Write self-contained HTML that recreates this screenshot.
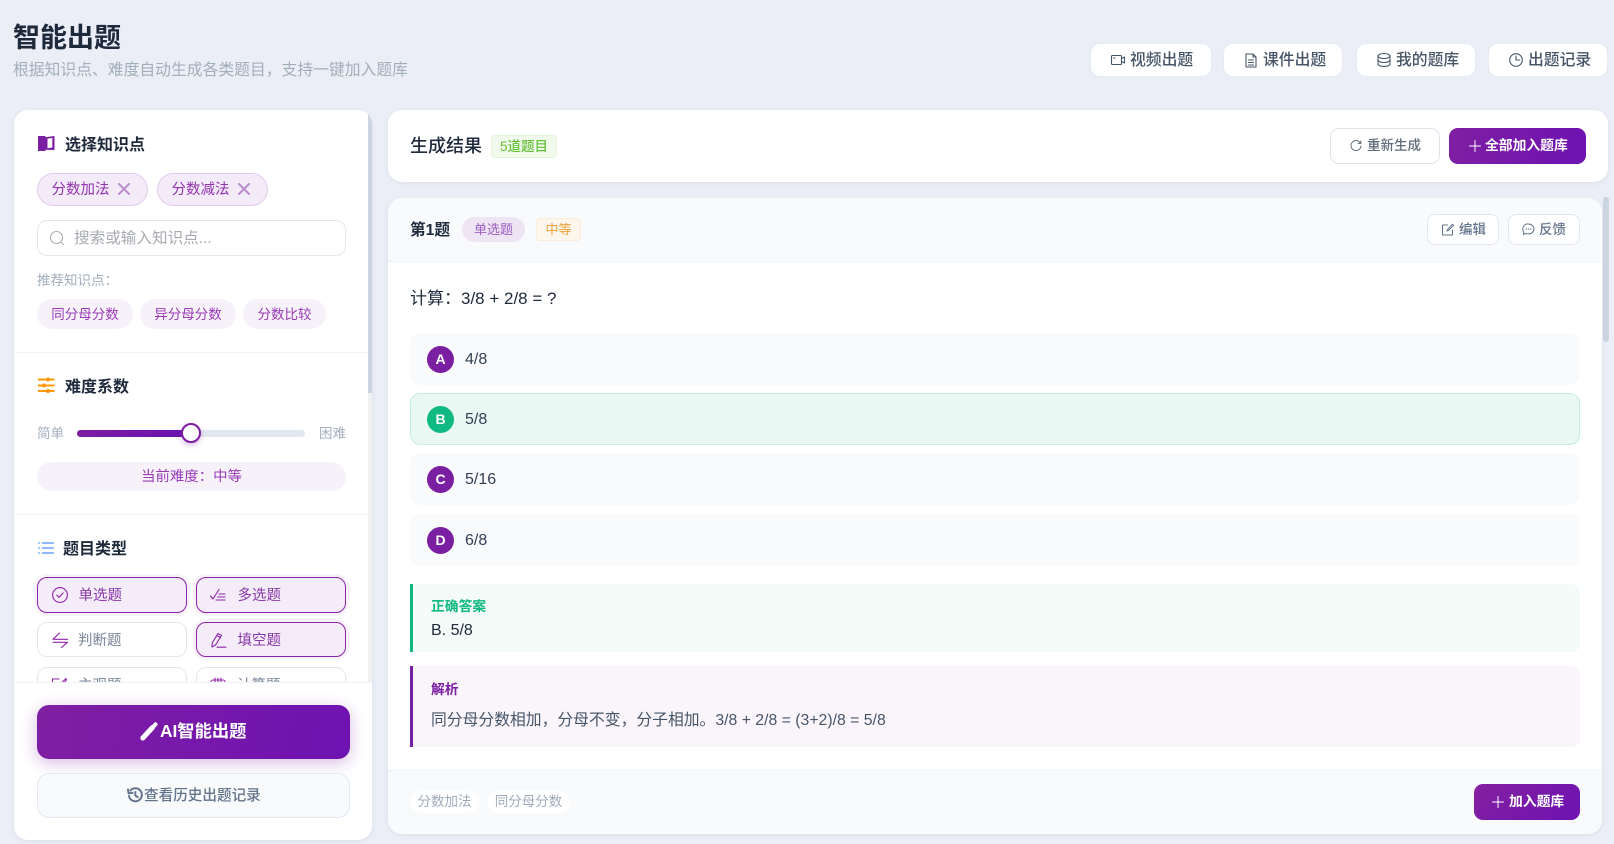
<!DOCTYPE html>
<html lang="zh"><head><meta charset="utf-8"><title>智能出题</title>
<style>
*{box-sizing:border-box;margin:0;padding:0}
html,body{width:1614px;height:844px;overflow:hidden;background:#ebeef6;font-family:"Liberation Sans","Noto Sans CJK SC",sans-serif}
.a{position:absolute}
.t{position:absolute;white-space:nowrap}
svg{position:absolute;fill:none;stroke:currentColor;stroke-linecap:round;stroke-linejoin:round}
.card{position:absolute;background:#fff;border-radius:14px;box-shadow:0 1px 4px rgba(100,116,139,.12)}
.topb{position:absolute;top:43px;height:34px;background:#fff;border:1px solid #e6eaf2;border-radius:10px;color:#475569;font-size:15.8px;font-weight:500;line-height:34px}
.h3{position:absolute;font-size:16px;font-weight:600;color:#1e293b;line-height:24px;white-space:nowrap}
.tag{position:absolute;top:173px;height:33px;border:1px solid #e3c9ec;background:#f3ebf8;border-radius:17px;color:#9333b0;font-size:14.5px;line-height:33px;padding-left:13.500px}
.rec{position:absolute;top:299px;height:30px;background:#f7f2fa;border-radius:15px;color:#9a3cb8;font-size:13.5px;line-height:31px;text-align:center}
.ty{position:absolute;width:150px;height:36px;border-radius:10px;border:1px solid #e2e8f0;background:#fff;color:#7a8698;font-size:14.5px;line-height:37px;padding-left:40px}
.ty.on{border:1.5px solid #8e24aa;background:#f4ecf9;color:#8a3aa8;box-shadow:0 0 0 3px rgba(142,36,170,.06);line-height:36px;padding-left:40.5px}
.ty svg{color:#8e24aa}
.opt{position:absolute;left:410px;width:1170px;height:52px;background:#f8fafc;border-radius:10px;font-size:16px;color:#334155;line-height:53px;padding-left:55px}
.opt b{position:absolute;left:17px;top:12.5px;width:27px;height:27px;border-radius:50%;background:#7b1fa2;color:#fff;font-size:14px;line-height:27px;text-align:center}
.sm{position:absolute;top:214px;width:72px;height:31px;background:#fff;border:1px solid #e2e8f0;border-radius:8px;color:#64748b;font-size:13.5px;font-weight:500;line-height:29px}
</style></head><body>

<div class="t" style="left:13px;top:18px;font-size:27px;font-weight:600;color:#1e293b;line-height:40px">智能出题</div>
<div class="t" style="left:13px;top:59px;font-size:15.8px;color:#a3aebd;line-height:24px">根据知识点、难度自动生成各类题目&#65292;支持一键加入题库</div>

<div class="topb" style="left:1090px;width:122px"><svg style="left:19px;top:8px" width="16" height="16" viewBox="0 0 16 16" stroke-width="1.1"><rect x="1.5" y="3.5" width="10" height="9" rx="1"/><path d="M11.5 6.5l3-1.5v6l-3-1.5M3.5 6h1.5"/></svg><span class="t" style="left:39px">视频出题</span></div>
<div class="topb" style="left:1223px;width:120px"><svg style="left:19px;top:8px" width="16" height="16" viewBox="0 0 16 16" stroke-width="1.1"><path d="M3 2h7l3 3v10H3zM10 2v3h3M5.5 8h5M5.5 10.5h5M5.5 13h5"/></svg><span class="t" style="left:39px">课件出题</span></div>
<div class="topb" style="left:1356px;width:120px"><svg style="left:19px;top:8px" width="16" height="16" viewBox="0 0 16 16" stroke-width="1.1"><ellipse cx="8" cy="4" rx="6" ry="2.5"/><path d="M2 4v8c0 1.4 2.7 2.5 6 2.5s6-1.1 6-2.5V4M2 8c0 1.4 2.7 2.5 6 2.5s6-1.1 6-2.5"/></svg><span class="t" style="left:39px">我的题库</span></div>
<div class="topb" style="left:1488px;width:120px"><svg style="left:19px;top:8px" width="16" height="16" viewBox="0 0 16 16" stroke-width="1.1"><circle cx="8" cy="8" r="6.3"/><path d="M8 4v4h3.5"/></svg><span class="t" style="left:39px">出题记录</span></div>

<!-- left panel -->
<div class="card" style="left:14px;top:110px;width:358px;height:730px;overflow:hidden">
  <div class="a" style="left:354px;top:0;width:4px;height:572px;background:#f1f1f1"></div>
  <div class="a" style="left:354px;top:0;width:4px;height:283px;background:#cbd5e1"></div>
  <div class="a" style="left:0;top:242px;width:354px;height:1px;background:#f1f5f9"></div>
  <div class="a" style="left:0;top:404px;width:354px;height:1px;background:#f1f5f9"></div>
</div>

<svg style="left:38px;top:135px;color:#7b1fa2" width="17" height="17" viewBox="0 0 17 17" stroke="none"><path fill="#7b1fa2" stroke="none" d="M0 1h7.5v1.2L16.5 1v14l-9-.3V16H0zM9.5 3.6v9.6l4.8-.7V3z" fill-rule="evenodd"/></svg>
<div class="h3" style="left:65px;top:134px">选择知识点</div>

<div class="tag" style="left:37px;width:111px">分数加法<svg style="left:80px;top:9px;color:#b98cce" width="12" height="12" viewBox="0 0 12 12" stroke-width="2"><path d="M1 1l10 10M11 1L1 11"/></svg></div>
<div class="tag" style="left:157px;width:111px">分数减法<svg style="left:80px;top:9px;color:#b98cce" width="12" height="12" viewBox="0 0 12 12" stroke-width="2"><path d="M1 1l10 10M11 1L1 11"/></svg></div>

<div class="a" style="left:37px;top:220px;width:309px;height:36px;border:1px solid #e2e8f0;border-radius:10px;background:#fff"></div>
<svg style="left:49px;top:230px;color:#a8abb2" width="16" height="16" viewBox="0 0 16 16" stroke-width="1.1"><circle cx="7.5" cy="7.5" r="6"/><path d="M12 12l2.5 2.5"/></svg>
<div class="t" style="left:74px;top:227px;font-size:15.6px;color:#a8abb2;line-height:24px">搜索或输入知识点...</div>

<div class="t" style="left:37px;top:272px;font-size:13.5px;color:#a3aebd;line-height:18px">推荐知识点&#65306;</div>
<div class="rec" style="left:37px;width:96px">同分母分数</div>
<div class="rec" style="left:140px;width:96px">异分母分数</div>
<div class="rec" style="left:243px;width:83px">分数比较</div>

<svg style="left:38px;top:377px;color:#ff9800" width="17" height="17" viewBox="0 0 17 17" stroke-width="2" stroke-linecap="butt"><path d="M0 2.5h16.5M0 8.500h16.500M0 14h16.500" stroke-linecap="butt"/><circle cx="10" cy="2.500" r="2" fill="#ff9800" stroke="none"/><circle cx="6" cy="8.500" r="2" fill="#ff9800" stroke="none"/><circle cx="10" cy="14" r="2" fill="#ff9800" stroke="none"/></svg>
<div class="h3" style="left:65px;top:376px">难度系数</div>

<div class="t" style="left:37px;top:425px;font-size:13.5px;color:#a3aebd;line-height:18px">简单</div>
<div class="a" style="left:77px;top:430px;width:228px;height:7px;background:#e2e8f0;border-radius:4px"></div>
<div class="a" style="left:77px;top:430px;width:114px;height:7px;background:linear-gradient(90deg,#7b1fa2,#6a11b0);border-radius:4px"></div>
<div class="a" style="left:181px;top:423px;width:20px;height:20px;border-radius:50%;background:#fff;border:2px solid #7b1fa2;box-shadow:0 2px 6px rgba(123,31,162,.3)"></div>
<div class="t" style="left:319px;top:425px;font-size:13.5px;color:#a3aebd;line-height:18px">困难</div>

<div class="a" style="left:37px;top:462px;width:309px;height:29px;border-radius:15px;background:#f7f2fa;color:#9a3cb8;font-size:14.4px;line-height:31px;text-align:center">当前难度&#65306;中等</div>

<svg style="left:38px;top:541px;color:#4f8ff7" width="16" height="14" viewBox="0 0 16 14" stroke-width="1.2"><path d="M4.500 2h11M4.500 7h11M4.500 12h11M.8 2h.8M.8 7h.8M.8 12h.8"/></svg>
<div class="h3" style="left:63px;top:538px">题目类型</div>

<div class="a" style="left:14px;top:560px;width:354px;height:122px;overflow:hidden">
  <div class="ty on" style="left:23px;top:17px">单选题<svg style="left:14px;top:8.500px" width="16" height="16" viewBox="0 0 16 16" stroke-width="1.100"><circle cx="8" cy="8" r="7.400"/><path d="M4.800 8.200l2.200 2.200 4.200-4.500"/></svg></div>
  <div class="ty on" style="left:182px;top:17px">多选题<svg style="left:13px;top:10px" width="17" height="14" viewBox="0 0 17 14" stroke-width="1.100"><path d="M.5 8l2.500 3L9 1.500M9 6h6M7.500 9h7.500M6 12h9"/></svg></div>
  <div class="ty" style="left:23px;top:62px;height:35px;line-height:36px">判断题<svg style="left:14px;top:9px" width="16" height="16" viewBox="0 0 16 16" stroke-width="1.100"><path d="M7.500 1L1 7.300h14.500M1 10.300h14.500L9.500 15.500"/></svg></div>
  <div class="ty on" style="left:182px;top:62px;height:35px;line-height:36px">填空题<svg style="left:14px;top:9px" width="16" height="16" viewBox="0 0 16 16" stroke-width="1.100"><path d="M1 15l.2-4L7 1.500l3.500 2L4.500 13zM6 3.500l3.500 2M6 15.200h9"/></svg></div>
  <div class="ty" style="left:23px;top:107px">主观题<svg style="left:13px;top:9px" width="16" height="16" viewBox="0 0 16 16" stroke-width="1.100"><path d="M8 2H1.500v12H13V9M15 1.500L7 9l-1 2.500 2.500-1L15.500 3z"/></svg></div>
  <div class="ty" style="left:182px;top:107px">计算题<svg style="left:13px;top:9px" width="16" height="16" viewBox="0 0 16 16" stroke-width="1.100"><path d="M3 3h10a2 2 0 012 2v8H1V5a2 2 0 012-2zM5 1v4M8 1v4M11 1v4"/></svg></div>
</div>

<div class="a" style="left:14px;top:682px;width:358px;height:158px;background:#fff;border-top:1px solid #eef2f7;border-radius:0 0 14px 14px"></div>
<div class="a" style="left:37px;top:705px;width:313px;height:54px;border-radius:12px;background:linear-gradient(100deg,#7f1fa2,#6e12b2);box-shadow:0 4px 16px rgba(123,31,162,.3)"></div>
<svg style="left:140px;top:722px" width="18" height="19" viewBox="0 0 18 19"><path d="M2.800 16L12.500 5.500" stroke="#fff" stroke-width="5" stroke-linecap="round"/><path d="M14.300 3.600l1.200-1.300" stroke="#fff" stroke-width="4" stroke-linecap="round"/></svg>
<div class="t" style="left:160px;top:718px;font-size:17.3px;font-weight:700;color:#fff;line-height:26px">AI智能出题</div>
<div class="a" style="left:37px;top:773px;width:313px;height:45px;border-radius:12px;background:#f8fafc;border:1px solid #e2e8f0"></div>
<svg style="left:127px;top:787px;color:#64748b" width="16" height="16" viewBox="0 0 16 16" stroke-width="2"><path d="M3.500 3.500A6.500 6.500 0 112 9M1 2.500l.6 3.900 3.900-.6M8.300 5v3.500l2.500 1.700"/></svg>
<div class="t" style="left:144px;top:785px;font-size:14.600px;font-weight:500;color:#64748b;line-height:22px">查看历史出题记录</div>

<!-- result header -->
<div class="card" style="left:388px;top:110px;width:1220px;height:72px"></div>
<div class="t" style="left:410px;top:132px;font-size:18px;font-weight:500;color:#1e293b;line-height:28px">生成结果</div>
<div class="a" style="left:491px;top:135px;width:66px;height:23px;background:#f0f9eb;border:1px solid #e1f3d8;border-radius:4px;color:#67c23a;font-size:13.500px;font-weight:500;line-height:21px;text-align:center">5道题目</div>

<div class="a" style="left:1330px;top:128px;width:110px;height:36px;border:1px solid #dfe3ec;border-radius:9px;background:#fff;color:#606b7a;font-size:13.500px;font-weight:500;line-height:34px"><svg style="left:19px;top:11px" width="12" height="12" viewBox="0 0 12 12" stroke-width="1"><path d="M10.500 3.300A5 5 0 1011 6M10.800 1v2.500H8.300"/></svg><span class="t" style="left:36px">重新生成</span></div>
<div class="a" style="left:1449px;top:128px;width:137px;height:36px;border-radius:9px;background:linear-gradient(100deg,#7f1fa2,#6e12b2);color:#fff;font-size:13.800px;font-weight:700;line-height:36px"><svg style="left:20px;top:12px" width="12" height="12" viewBox="0 0 12 12" stroke-width="1"><path d="M6 .5v11M.5 6h11"/></svg><span class="t" style="left:36px">全部加入题库</span></div>

<!-- question card -->
<div class="card" style="left:388px;top:198px;width:1214px;height:636px;overflow:hidden">
  <div class="a" style="left:0;top:0;width:100%;height:64px;background:#f8fafc;border-bottom:1px solid #eef2f7"></div>
  <div class="a" style="left:0;top:572px;width:100%;height:64px;background:#f8fafc;border-top:1px solid #eef2f7"></div>
</div>
<div class="a" style="left:1603px;top:197px;width:6px;height:145px;background:#cbd5e1;border-radius:3px"></div>

<div class="t" style="left:410px;top:220px;font-size:15.7px;font-weight:700;color:#1e293b;line-height:22px">第1题</div>
<div class="a" style="left:462px;top:217px;width:63px;height:25px;border-radius:13px;background:#eee5f4;color:#9c5fbf;font-size:13px;line-height:25px;text-align:center">单选题</div>
<div class="a" style="left:536px;top:218px;width:45px;height:23px;border-radius:4px;background:#fdf6ec;border:1px solid #faecd8;color:#e6a23c;font-size:13px;line-height:21px;text-align:center">中等</div>
<div class="sm" style="left:1427px"><svg style="left:13px;top:8px" width="13" height="13" viewBox="0 0 13 13" stroke-width="1"><path d="M6.500 2H1.500v10h10V7M11.500 1.200L6.500 6.500l-.5 1.500 1.500-.5L12.500 2.200z"/></svg><span class="t" style="left:31px">编辑</span></div>
<div class="sm" style="left:1508px"><svg style="left:13px;top:8px" width="13" height="13" viewBox="0 0 13 13" stroke-width="1"><path d="M6.500 1a5.500 5 0 110 10c-1 0-2-.2-2.800-.6L1.500 11.500l.4-2.400A5 5 0 016.500 1z"/><path d="M4.200 6h.2M6.400 6h.2M8.600 6h.2" stroke-width="1.200"/></svg><span class="t" style="left:30px">反馈</span></div>

<div class="t" style="left:410px;top:286px;font-size:17px;color:#1e293b;line-height:25px">计算&#65306;3/8 + 2/8 = ?</div>

<div class="opt" style="top:333px"><b>A</b>4/8</div>
<div class="opt" style="top:393px;background:#e9f8f2;border:1px solid #c5eedd;line-height:51px;padding-left:54px"><b style="background:#10b981;left:16px;top:11.500px">B</b>5/8</div>
<div class="opt" style="top:453px"><b>C</b>5/16</div>
<div class="opt" style="top:514px"><b>D</b>6/8</div>

<div class="a" style="left:410px;top:584px;width:1170px;height:68px;background:#f5fbf9;border-left:3px solid #10b981;border-radius:0 8px 8px 0"></div>
<div class="t" style="left:431px;top:598px;font-size:13.800px;font-weight:600;color:#10b981;line-height:18px">正确答案</div>
<div class="t" style="left:431px;top:619px;font-size:16px;color:#1e293b;line-height:23px">B. 5/8</div>

<div class="a" style="left:410px;top:666px;width:1170px;height:81px;background:#faf5fb;border-left:3px solid #7b1fa2;border-radius:0 8px 8px 0"></div>
<div class="t" style="left:431px;top:681px;font-size:13.800px;font-weight:600;color:#7b1fa2;line-height:18px">解析</div>
<div class="t" style="left:431px;top:709px;font-size:15.800px;color:#475569;line-height:24px">同分母分数相加&#65292;分母不变&#65292;分子相加。3/8 + 2/8 = (3+2)/8 = 5/8</div>

<div class="a" style="left:410px;top:791px;width:69px;height:22px;background:#fff;border-radius:11px;color:#a0abb9;font-size:13.500px;line-height:22px;text-align:center">分数加法</div>
<div class="a" style="left:487px;top:791px;width:83px;height:22px;background:#fff;border-radius:11px;color:#a0abb9;font-size:13.500px;line-height:22px;text-align:center">同分母分数</div>
<div class="a" style="left:1474px;top:784px;width:106px;height:36px;border-radius:9px;background:linear-gradient(135deg,#8420a0,#6e12b2);color:#fff;font-size:13.800px;font-weight:700;line-height:36px"><svg style="left:18px;top:12px" width="12" height="12" viewBox="0 0 12 12" stroke-width="1"><path d="M6 .5v11M.5 6h11"/></svg><span class="t" style="left:35px">加入题库</span></div>

</body></html>
